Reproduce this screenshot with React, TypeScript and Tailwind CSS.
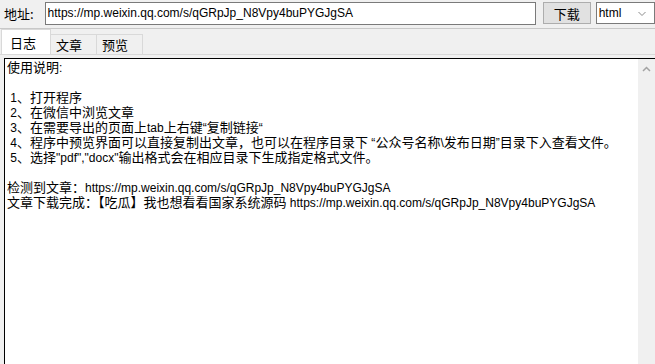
import React from "react";

const LAT = /^[\x00-\x7F\u201c\u201d]+$/;

function T({ s }: { s: string }) {
  const parts = s.split(/([\x00-\x7F\u201c\u201d]+)/).filter((p) => p.length > 0);
  return (
    <>
      {parts.map((p, i) =>
        LAT.test(p) ? (
          <span key={i} className="inline-block h-[15px] font-['Liberation_Sans',sans-serif] text-[12px] leading-[15px]">{p}</span>
        ) : (
          <span key={i} className="inline-block h-[15px] font-['Noto_Sans_CJK_SC',sans-serif] text-[13px] leading-[15px]">{p}</span>
        )
      )}
    </>
  );
}

export default function App() {
  const url = "https://mp.weixin.qq.com/s/qGRpJp_N8Vpy4buPYGJgSA";
  const lines = [
    "使用说明:",
    "\u00a0",
    " 1、打开程序",
    " 2、在微信中浏览文章",
    " 3、在需要导出的页面上tab上右键“复制链接“",
    " 4、程序中预览界面可以直接复制出文章，也可以在程序目录下 “公众号名称\\发布日期”目录下入查看文件。",
    " 5、选择\"pdf\",\"docx\"输出格式会在相应目录下生成指定格式文件。",
    "\u00a0",
    "检测到文章：" + url,
    "文章下载完成：【吃瓜】我也想看看国家系统源码 " + url,
  ];
  return (
    <div className="w-[655px] h-[364px] bg-[#f0f0f0] overflow-hidden flex flex-col text-[12px] text-black leading-[15px] font-['Noto_Sans_CJK_SC',sans-serif]">
      <div className="flex items-center h-[26px]">
        <span className="ml-[4px] w-[41px] text-[13px]">地址:</span>
        <div className="w-[497px] h-[23px] bg-white border border-[#7a7a7a] flex items-center pl-[2px] font-['Liberation_Sans',sans-serif] text-[12px]">{url}</div>
        <div className="ml-[7px] w-[48px] h-[22px] bg-[#e1e1e1] border border-[#adadad] flex items-center justify-center text-[13px]">下载</div>
        <div className="ml-[5px] w-[60px] h-[22px] bg-white border border-[#7a7a7a] flex items-center pl-[2px] relative font-['Liberation_Sans',sans-serif]">
          <span>html</span>
          <svg className="absolute left-[41px] top-[8px]" width="8" height="6" viewBox="0 0 8 6"><path d="M0.5 1 L4 4.5 L7.5 1" stroke="#8a8a8a" fill="none" strokeWidth="1" /></svg>
        </div>
      </div>
      <div className="h-[1px] bg-[#c8c8c8] mt-[2px]" />
      <div className="flex items-end h-[25px] border-b border-[#d9d9d9] mt-[1px]">
        <div className="ml-[1px] w-[50px] h-[25px] bg-white border border-[#d9d9d9] border-b-0 flex items-center pl-[8px] text-[13px]">日志</div>
        <div className="w-[46px] h-[20px] border border-[#d9d9d9] border-l-0 border-b-0 flex items-center pl-[5px] text-[13px]">文章</div>
        <div className="w-[46px] h-[20px] border border-[#d9d9d9] border-l-0 border-b-0 flex items-center pl-[5px] text-[13px]">预览</div>
      </div>
      <div className="flex-1 flex mt-[3px] ml-[4px] border-t border-l border-black bg-white">
        <div className="flex-1 pl-[2px] pt-0 whitespace-pre">
          {lines.map((l, i) => (
            <div key={i} className="h-[15px] leading-[15px]"><T s={l} /></div>
          ))}
        </div>
        <div className="w-[17px] bg-[#f0f0f0] flex justify-center pt-[7px]">
          <svg width="9" height="6" viewBox="0 0 9 6"><path d="M1 5 L4.5 1.5 L8 5" stroke="#a3a3a3" fill="none" strokeWidth="1.5" /></svg>
        </div>
      </div>
    </div>
  );
}
